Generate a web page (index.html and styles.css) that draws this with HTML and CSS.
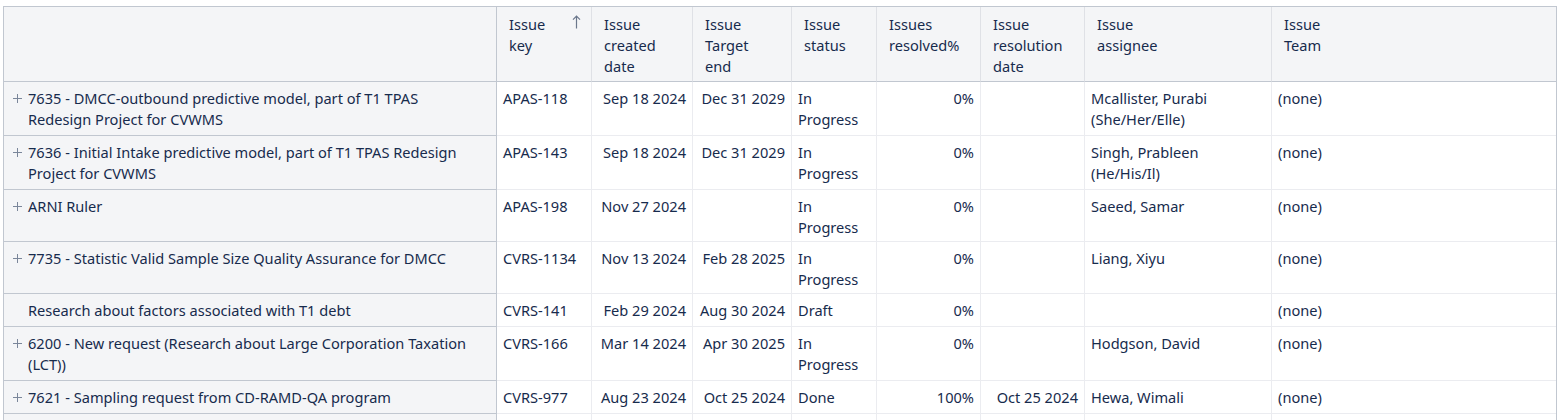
FILE: index.html
```html
<!DOCTYPE html>
<html>
<head>
<meta charset="utf-8">
<link rel="stylesheet" href="styles.css">
</head>
<body>
<div class="grid-wrap">
<table class="grid">
  <thead>
    <tr>
      <th class="c1 w1"></th>
      <th class="w2"><div class="hd"><span>Issue<br>key</span><svg class="sort" width="9" height="14" viewBox="0 0 9 14"><path d="M4.5 13.5V1.2M1 4.6L4.5 1.1L8 4.6" fill="none" stroke="#6b778c" stroke-width="1.2"/></svg></div></th>
      <th class="w3">Issue<br>created<br>date</th>
      <th class="w4">Issue<br>Target<br>end</th>
      <th class="w5">Issue<br>status</th>
      <th class="w6">Issues<br>resolved%</th>
      <th class="w7">Issue<br>resolution<br>date</th>
      <th class="w8">Issue<br>assignee</th>
      <th class="w9">Issue<br>Team</th>
    </tr>
  </thead>
  <tbody>
    <tr>
      <td class="c1"><div class="name"><span class="plus"></span><span>7635 - DMCC-outbound predictive model, part of T1 TPAS Redesign Project for CVWMS</span></div></td>
      <td>APAS-118</td>
      <td class="num">Sep 18 2024</td>
      <td class="num">Dec 31 2029</td>
      <td>In<br>Progress</td>
      <td class="num">0%</td>
      <td class="num"></td>
      <td>Mcallister, Purabi<br>(She/Her/Elle)</td>
      <td>(none)</td>
    </tr>
    <tr>
      <td class="c1"><div class="name"><span class="plus"></span><span>7636 - Initial Intake predictive model, part of T1 TPAS Redesign Project for CVWMS</span></div></td>
      <td>APAS-143</td>
      <td class="num">Sep 18 2024</td>
      <td class="num">Dec 31 2029</td>
      <td>In<br>Progress</td>
      <td class="num">0%</td>
      <td class="num"></td>
      <td>Singh, Prableen<br>(He/His/Il)</td>
      <td>(none)</td>
    </tr>
    <tr>
      <td class="c1"><div class="name"><span class="plus"></span><span>ARNI Ruler</span></div></td>
      <td>APAS-198</td>
      <td class="num">Nov 27 2024</td>
      <td class="num"></td>
      <td>In<br>Progress</td>
      <td class="num">0%</td>
      <td class="num"></td>
      <td>Saeed, Samar</td>
      <td>(none)</td>
    </tr>
    <tr>
      <td class="c1"><div class="name"><span class="plus"></span><span>7735 - Statistic Valid Sample Size Quality Assurance for DMCC</span></div></td>
      <td>CVRS-1134</td>
      <td class="num">Nov 13 2024</td>
      <td class="num">Feb 28 2025</td>
      <td>In<br>Progress</td>
      <td class="num">0%</td>
      <td class="num"></td>
      <td>Liang, Xiyu</td>
      <td>(none)</td>
    </tr>
    <tr>
      <td class="c1"><div class="name"><span class="noplus"></span><span>Research about factors associated with T1 debt</span></div></td>
      <td>CVRS-141</td>
      <td class="num">Feb 29 2024</td>
      <td class="num">Aug 30 2024</td>
      <td>Draft</td>
      <td class="num">0%</td>
      <td class="num"></td>
      <td></td>
      <td>(none)</td>
    </tr>
    <tr>
      <td class="c1"><div class="name"><span class="plus"></span><span>6200 - New request (Research about Large Corporation Taxation (LCT))</span></div></td>
      <td>CVRS-166</td>
      <td class="num">Mar 14 2024</td>
      <td class="num">Apr 30 2025</td>
      <td>In<br>Progress</td>
      <td class="num">0%</td>
      <td class="num"></td>
      <td>Hodgson, David</td>
      <td>(none)</td>
    </tr>
    <tr>
      <td class="c1"><div class="name"><span class="plus"></span><span>7621 - Sampling request from CD-RAMD-QA program</span></div></td>
      <td>CVRS-977</td>
      <td class="num">Aug 23 2024</td>
      <td class="num">Oct 25 2024</td>
      <td>Done</td>
      <td class="num">100%</td>
      <td class="num">Oct 25 2024</td>
      <td>Hewa, Wimali</td>
      <td>(none)</td>
    </tr>
    <tr class="filler">
      <td class="c1"></td>
      <td></td><td></td><td></td><td></td><td></td><td></td><td></td><td></td>
    </tr>
  </tbody>
</table>
</div>
</body>
</html>
```
FILE: styles.css
```css
html, body {
  margin: 0;
  padding: 0;
  background: #ffffff;
  overflow: hidden;
}

body {
  font-family: "Noto Sans", "Open Sans", sans-serif;
  font-size: 14.6px;
  color: #172b4d;
}

.grid-wrap {
  margin: 6px 0 0 3px;
  width: 1554px;
  box-sizing: border-box;
  border: 1px solid #c1c7d0;
  border-bottom: none;
}

.grid {
  width: 1552px;
  table-layout: fixed;
  border-collapse: separate;
  border-spacing: 0;
}

.grid th,
.grid td {
  box-sizing: border-box;
  vertical-align: top;
  text-align: left;
  font-weight: normal;
  line-height: 21px;
}

.grid th {
  background: #f4f5f7;
  padding: 7px 10px 4px 12px;
  height: 75px;
  border-right: 1px solid #dfe1e6;
  border-bottom: 1px solid #c1c7d0;
  color: #172b4d;
}

.grid td {
  padding: 6px 6px 3px 6px;
  border-right: 1px solid #ebecf0;
  border-bottom: 1px solid #ebecf0;
  white-space: nowrap;
}

.grid th:last-child,
.grid td:last-child {
  border-right: none;
}

.grid .c1 {
  background: #f4f5f7;
  border-right: 1px solid #c1c7d0;
  border-bottom: 1px solid #c1c7d0;
  white-space: normal;
  padding: 6px 16px 5px 9px;
}

.grid th.c1 {
  padding: 0;
}

.grid td.num {
  text-align: right;
}

.w1 { width: 493px; }
.w2 { width: 95px; }
.w3 { width: 101px; }
.w4 { width: 99px; }
.w5 { width: 85px; }
.w6 { width: 104px; }
.w7 { width: 104px; }
.w8 { width: 187px; }
.w9 { width: 284px; }

.hd {
  display: flex;
  justify-content: space-between;
  align-items: flex-start;
}

.sort {
  margin-top: 1px;
}

.name {
  display: flex;
  align-items: flex-start;
}

.plus,
.noplus {
  flex: 0 0 9px;
  width: 9px;
  height: 9px;
  margin: 6px 6px 0 0;
  position: relative;
}

.plus::before,
.plus::after {
  content: "";
  position: absolute;
  background: #7a869a;
}

.plus::before {
  left: 0;
  top: 4px;
  width: 9px;
  height: 1px;
}

.plus::after {
  left: 4px;
  top: 0;
  width: 1px;
  height: 9px;
}

.filler td {
  height: 33px;
}
```
